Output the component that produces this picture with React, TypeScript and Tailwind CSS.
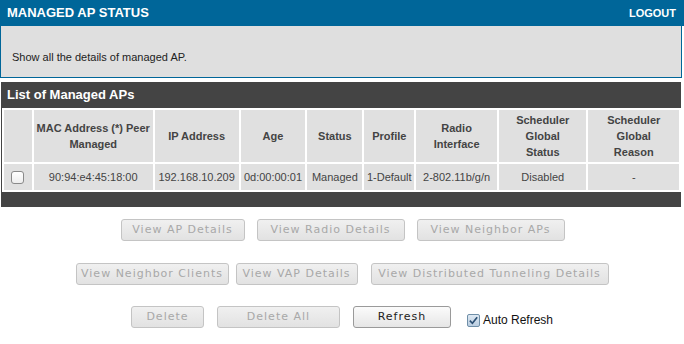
import React from "react";

const cols = [
  { label: [""], w: "w-[28px]" },
  { label: ["MAC Address (*) Peer", "Managed"], w: "w-[119px]" },
  { label: ["IP Address"], w: "w-[84px]" },
  { label: ["Age"], w: "w-[65px]" },
  { label: ["Status"], w: "w-[55px]" },
  { label: ["Profile"], w: "w-[50px]" },
  { label: ["Radio", "Interface"], w: "w-[81px]" },
  { label: ["Scheduler", "Global", "Status"], w: "w-[88px]" },
  { label: ["Scheduler", "Global", "Reason"], w: "w-[91px]" },
];

const row = ["90:94:e4:45:18:00", "192.168.10.209", "0d:00:00:01", "Managed", "1-Default", "2-802.11b/g/n", "Disabled", "-"];

function Btn({ children, active = false, w }: { children: React.ReactNode; active?: boolean; w: string }) {
  return (
    <button
      className={`${w} h-[22px] rounded-[3px] border text-[11px] tracking-[1px] font-['DejaVu_Sans',sans-serif] bg-gradient-to-b ${
        active
          ? "border-[#9a9a9a] from-[#fbfbfb] to-[#e6e6e6] text-[#222]"
          : "border-[#c4c4c4] from-[#f0f0f0] to-[#e2e2e2] text-[#a8a8a8]"
      }`}
    >
      {children}
    </button>
  );
}

export default function App() {
  return (
    <div className="w-[684px] h-[344px] bg-white font-['Liberation_Sans',Arial,sans-serif] text-[#333]">
      {/* Title bar */}
      <div className="h-[26px] bg-[#006699] flex items-center justify-between px-[7px] text-white font-bold">
        <span className="text-[13px]">MANAGED AP STATUS</span>
        <span className="text-[11px] pr-[1px]">LOGOUT</span>
      </div>
      <div className="w-[682px] h-[52px] bg-[#dfdfdf] border border-t-0 border-[#006699] flex items-end pb-[12px] pl-[11px] text-[11px] text-[#222]">
        Show all the details of managed AP.
      </div>

      {/* List panel */}
      <div className="mt-[4px] ml-[1px] w-[680px] h-[125px] bg-[#444444]">
        <div className="h-[26px] flex items-center pl-[6px] text-white font-bold text-[13px]">List of Managed APs</div>
        <table className="ml-[1px] table-fixed border-separate border-spacing-[2px] bg-white text-[11px] text-[#444] text-center">
          <thead>
            <tr className="h-[52px]">
              {cols.map((c, i) => (
                <th key={i} className={`${c.w} bg-[#e0e0e0] font-bold leading-[16px] p-0 whitespace-nowrap`}>
                  {c.label.map((l, j) => (
                    <div key={j}>{l}</div>
                  ))}
                </th>
              ))}
            </tr>
          </thead>
          <tbody>
            <tr className="h-[26px]">
              <td className="bg-[#e0e0e0]">
                <span className="block mx-auto w-[13px] h-[13px] rounded-[3px] border border-[#8a8a8a] bg-gradient-to-b from-white to-[#eeeeee]" />
              </td>
              {row.map((v, i) => (
                <td key={i} className="bg-[#e0e0e0] px-0 whitespace-nowrap overflow-hidden">
                  {v}
                </td>
              ))}
            </tr>
          </tbody>
        </table>
      </div>

      {/* Buttons */}
      <div className="flex flex-col items-center mt-[12px] gap-[22px]">
        <div className="flex gap-[12px] pl-[1px]">
          <Btn w="w-[124px]">View AP Details</Btn>
          <Btn w="w-[148px]">View Radio Details</Btn>
          <Btn w="w-[148px]">View Neighbor APs</Btn>
        </div>
        <div className="flex">
          <Btn w="w-[153px]">View Neighbor Clients</Btn>
          <div className="w-[7px]" />
          <Btn w="w-[122px]">View VAP Details</Btn>
          <div className="w-[13px]" />
          <Btn w="w-[238px]">View Distributed Tunneling Details</Btn>
        </div>
        <div className="flex items-start gap-[13px] pl-[0px] -mt-[1px]">
          <Btn w="w-[73px]">Delete</Btn>
          <Btn w="w-[123px]">Delete All</Btn>
          <Btn w="w-[98px]" active>
            Refresh
          </Btn>
          <label className="flex items-center gap-[3px] ml-[3px] pt-[5px] text-[12px] text-[#111]">
            <span className="w-[13px] h-[13px] rounded-[2px] border border-[#6f8fa8] bg-gradient-to-b from-[#dfe9f3] to-[#b9cde0] flex items-center justify-center">
              <svg viewBox="0 0 12 12" className="w-[11px] h-[11px]">
                <path d="M2 6.2 L4.8 9 L10 2.5" fill="none" stroke="#2b4f73" strokeWidth="1.8" />
              </svg>
            </span>
            Auto Refresh
          </label>
        </div>
      </div>
    </div>
  );
}
